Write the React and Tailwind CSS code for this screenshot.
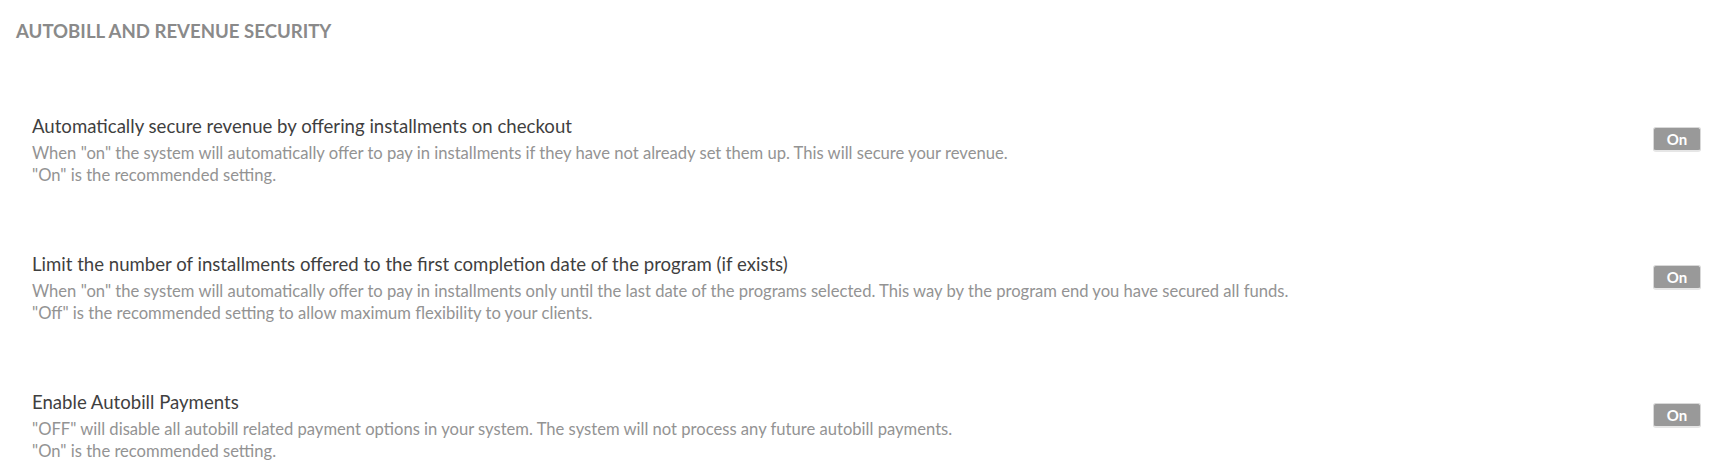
import React from 'react';

const settings = [
  {
    title: 'Automatically secure revenue by offering installments on checkout',
    lines: [
      'When "on" the system will automatically offer to pay in installments if they have not already set them up. This will secure your revenue.',
      '"On" is the recommended setting.',
    ],
  },
  {
    title: 'Limit the number of installments offered to the first completion date of the program (if exists)',
    lines: [
      'When "on" the system will automatically offer to pay in installments only until the last date of the programs selected. This way by the program end you have secured all funds.',
      '"Off" is the recommended setting to allow maximum flexibility to your clients.',
    ],
  },
  {
    title: 'Enable Autobill Payments',
    lines: [
      '"OFF" will disable all autobill related payment options in your system. The system will not process any future autobill payments.',
      '"On" is the recommended setting.',
    ],
  },
];

const Toggle = () => (
  <button
    type="button"
    className="mt-[12px] w-[48px] h-[25px] rounded-[3px] bg-[#999999] border border-[#d9d9d9] border-b-2 border-b-[#e6e6e6] text-white text-[15px] font-bold leading-none flex items-center justify-center shrink-0"
  >
    On
  </button>
);

export default function App() {
  return (
    <div className="min-h-screen bg-white pl-4 pr-6 pt-[20px] font-['Lato','Open_Sans',sans-serif]">
      <h2 className="text-[18.6px] leading-[22px] font-bold text-[#8a8a8a]">
        AUTOBILL AND REVENUE SECURITY
      </h2>

      <div className="mt-[73px] flex flex-col gap-[67px] pl-4">
        {settings.map((s) => (
          <div key={s.title} className="flex items-start justify-between">
            <div>
              <div className="text-[18.6px] leading-[22px] text-[#3f3f3f]">{s.title}</div>
              <div className="mt-[5px] text-[16.6px] leading-[22px] text-[#939393]">
                {s.lines.map((l) => (
                  <div key={l}>{l}</div>
                ))}
              </div>
            </div>
            <Toggle />
          </div>
        ))}
      </div>
    </div>
  );
}
